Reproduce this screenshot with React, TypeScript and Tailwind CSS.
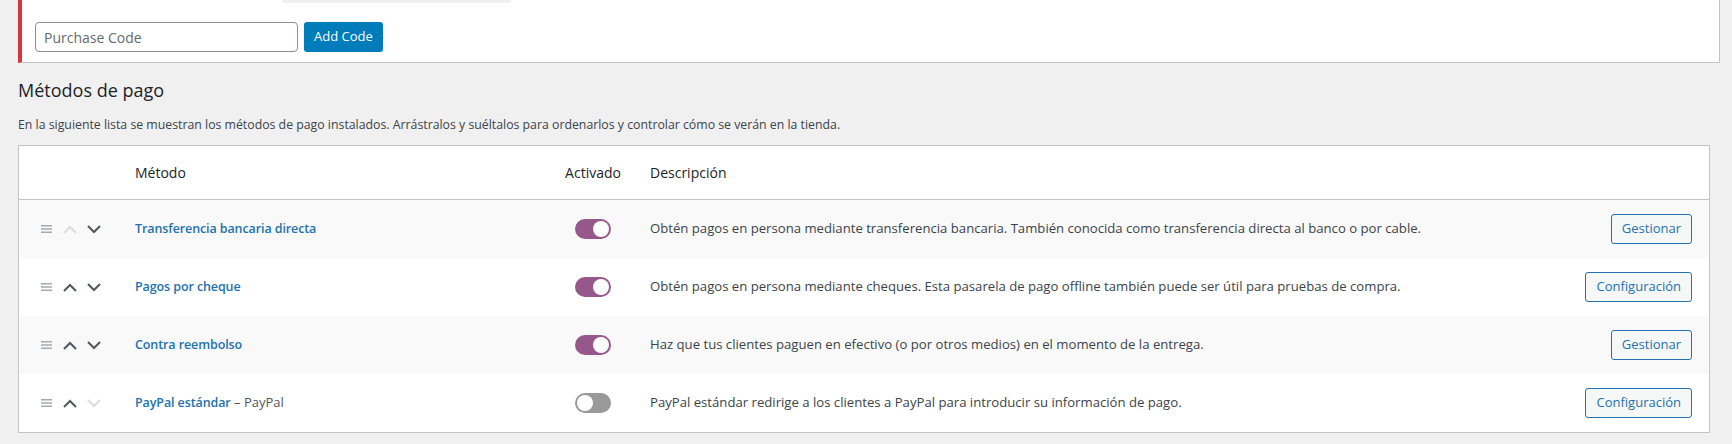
import React from "react";

type Gateway = {
  name: string;
  suffix?: string;
  enabled: boolean;
  description: string;
  action: string;
  upDisabled?: boolean;
  downDisabled?: boolean;
};

const gateways: Gateway[] = [
  {
    name: "Transferencia bancaria directa",
    enabled: true,
    description:
      "Obtén pagos en persona mediante transferencia bancaria. También conocida como transferencia directa al banco o por cable.",
    action: "Gestionar",
    upDisabled: true,
  },
  {
    name: "Pagos por cheque",
    enabled: true,
    description:
      "Obtén pagos en persona mediante cheques. Esta pasarela de pago offline también puede ser útil para pruebas de compra.",
    action: "Configuración",
  },
  {
    name: "Contra reembolso",
    enabled: true,
    description:
      "Haz que tus clientes paguen en efectivo (o por otros medios) en el momento de la entrega.",
    action: "Gestionar",
  },
  {
    name: "PayPal estándar",
    suffix: "PayPal",
    enabled: false,
    description:
      "PayPal estándar redirige a los clientes a PayPal para introducir su información de pago.",
    action: "Configuración",
    downDisabled: true,
  },
];

function DragHandle() {
  return (
    <svg width="11" height="8" viewBox="0 0 11 8" className="block">
      <rect x="0" y="0" width="11" height="1.5" fill="#a7aaad" />
      <rect x="0" y="3.25" width="11" height="1.5" fill="#a7aaad" />
      <rect x="0" y="6.5" width="11" height="1.5" fill="#a7aaad" />
    </svg>
  );
}

function Chevron({ up, disabled }: { up?: boolean; disabled?: boolean }) {
  return (
    <svg width="14" height="9" viewBox="0 0 14 9" className="block">
      <path
        d={up ? "M1 8 L7 2 L13 8" : "M1 1 L7 7 L13 1"}
        fill="none"
        stroke={disabled ? "#dcdcde" : "#50575e"}
        strokeWidth="2"
      />
    </svg>
  );
}

function Toggle({ on }: { on: boolean }) {
  return (
    <span
      className={
        on
          ? "flex h-[20px] w-[36px] items-center justify-end rounded-full border-2 border-[#96588a] bg-[#96588a]"
          : "flex h-[20px] w-[36px] items-center justify-start rounded-full border-2 border-[#999999] bg-[#999999]"
      }
    >
      <span className="block h-[16px] w-[16px] rounded-full bg-white" />
    </span>
  );
}

export default function App() {
  return (
    <div
      className="h-[444px] w-[1732px] overflow-hidden bg-[#f0f0f1] text-[#3c434a]"
      style={{ fontFamily: '"Segoe UI", "Open Sans", "Noto Sans", sans-serif' }}
    >
      {/* licence notice */}
      <div className="ml-[18px] h-[63px] w-[1702px] border-b border-r border-l-4 border-[#c3c4c7] border-l-[#d63638] bg-white">
        <div className="ml-[260px] h-[3px] w-[229px] rounded-b-[4px] bg-[#f0f0f1]" />
        <div className="mt-[19px] flex gap-[6px] pl-[13px]">
          <input
            placeholder="Purchase Code"
            className="h-[30px] w-[263px] rounded-[4px] border border-[#8c8f94] px-[8px] text-[14px] text-[#2c3338] placeholder:text-[#646970] outline-none"
          />
          <button className="h-[30px] w-[79px] rounded-[3px] bg-[#007cba] text-[13px] text-white">
            Add Code
          </button>
        </div>
      </div>

      <h2 className="mt-[16px] pl-[18px] text-[18px] leading-[22px] font-medium text-[#1d2327]">
        Métodos de pago
      </h2>
      <p className="mt-[14px] pl-[18px] text-[12.3px] leading-[20px]">
        En la siguiente lista se muestran los métodos de pago instalados. Arrástralos y suéltalos para ordenarlos y controlar cómo se verán en la tienda.
      </p>

      <div className="ml-[18px] mt-[10px] w-[1692px] border border-[#c3c4c7] bg-white">
        <div className="flex h-[54px] items-center border-b border-[#c3c4c7] text-[14px] text-[#1d2327]">
          <div className="w-[116px]" />
          <div className="w-[418px]">Método</div>
          <div className="w-[80px] text-center">Activado</div>
          <div className="flex-1 pl-[17px]">Descripción</div>
        </div>
        {gateways.map((g, i) => (
          <div
            key={g.name}
            className={
              i % 2 === 0
                ? "flex h-[58px] items-center bg-[#f9f9f9]"
                : "flex h-[58px] items-center bg-white"
            }
          >
            <div className="flex w-[116px] items-center gap-[11px] pl-[22px]">
              <DragHandle />
              <Chevron up disabled={g.upDisabled} />
              <span className="-ml-[1px]">
                <Chevron disabled={g.downDisabled} />
              </span>
            </div>
            <div className="w-[418px] text-[13px]">
              <a className="text-[12.5px] tracking-[-0.1px] font-semibold text-[#2271b1]" href="#">
                {g.name}
              </a>
              {g.suffix && <span className="text-[#50575e]"> – {g.suffix}</span>}
            </div>
            <div className="flex w-[80px] justify-center">
              <Toggle on={g.enabled} />
            </div>
            <div className="flex-1 pl-[17px] text-[13.15px]">{g.description}</div>
            <div className="pr-[17px]">
              <button className="h-[30px] rounded-[3px] border border-[#2271b1] bg-[#f6f7f7] px-[10px] text-[13px] text-[#2271b1]">
                {g.action}
              </button>
            </div>
          </div>
        ))}
      </div>
    </div>
  );
}
